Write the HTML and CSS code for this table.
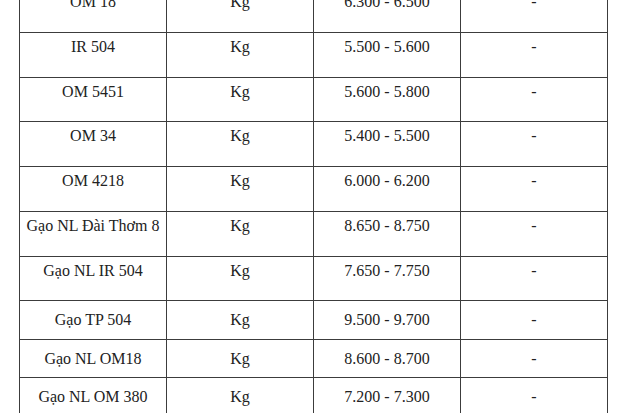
FILE: index.html
```html
<!DOCTYPE html>
<html lang="vi">
<head>
<meta charset="utf-8">
<title>Bảng giá lúa gạo</title>
<link rel="stylesheet" href="styles.css">
</head>
<body>
<div class="price-table">
  <div class="cell tall h44">OM 18</div><div class="cell tall h44">Kg</div><div class="cell tall h44">6.300 - 6.500</div><div class="cell tall h44">-</div>
  <div class="cell tall h44">IR 504</div><div class="cell tall h44">Kg</div><div class="cell tall h44">5.500 - 5.600</div><div class="cell tall h44">-</div>
  <div class="cell tall h43">OM 5451</div><div class="cell tall h43">Kg</div><div class="cell tall h43">5.600 - 5.800</div><div class="cell tall h43">-</div>
  <div class="cell tall h44">OM 34</div><div class="cell tall h44">Kg</div><div class="cell tall h44">5.400 - 5.500</div><div class="cell tall h44">-</div>
  <div class="cell tall h44">OM 4218</div><div class="cell tall h44">Kg</div><div class="cell tall h44">6.000 - 6.200</div><div class="cell tall h44">-</div>
  <div class="cell tall h44">Gạo NL Đài Thơm 8</div><div class="cell tall h44">Kg</div><div class="cell tall h44">8.650 - 8.750</div><div class="cell tall h44">-</div>
  <div class="cell tall h43">Gạo NL IR 504</div><div class="cell tall h43">Kg</div><div class="cell tall h43">7.650 - 7.750</div><div class="cell tall h43">-</div>
  <div class="cell short h38">Gạo TP 504</div><div class="cell short h38">Kg</div><div class="cell short h38">9.500 - 9.700</div><div class="cell short h38">-</div>
  <div class="cell short h37">Gạo NL OM18</div><div class="cell short h37">Kg</div><div class="cell short h37">8.600 - 8.700</div><div class="cell short h37">-</div>
  <div class="cell short h38">Gạo NL OM 380</div><div class="cell short h38">Kg</div><div class="cell short h38">7.200 - 7.300</div><div class="cell short h38">-</div>
</div>
</body>
</html>
```
FILE: styles.css
```css
html, body {
  margin: 0;
  padding: 0;
  background: #ffffff;
  overflow: hidden;
}

body {
  font-family: "Liberation Serif", "Times New Roman", serif;
  font-size: 16px;
  color: #222222;
}

.price-table {
  display: grid;
  grid-template-columns: repeat(4, 146px);
  gap: 1px;
  width: max-content;
  margin: -13px 0 0 19px;
  padding: 1px;
  background: #3c3c3c;
}

.cell {
  background: #ffffff;
  display: flex;
  justify-content: center;
  line-height: 18px;
  white-space: nowrap;
  box-sizing: border-box;
}

.tall {
  align-items: flex-start;
  padding-top: 5px;
}

.short {
  align-items: center;
}

.h44 { height: 44px; }
.h43 { height: 43px; }
.h38 { height: 38px; }
.h37 { height: 37px; }
```
